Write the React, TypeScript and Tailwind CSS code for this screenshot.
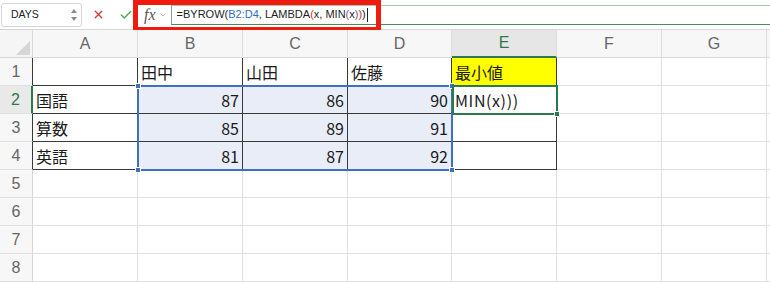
import { Fragment } from "react";
import { Check, X } from "lucide-react";

const cols = ["A", "B", "C", "D", "E", "F", "G", "H"];
const rows = [1, 2, 3, 4, 5, 6, 7, 8];

const data: Record<string, string> = {
  B1: "田中", C1: "山田", D1: "佐藤", E1: "最小値",
  A2: "国語", B2: "87", C2: "86", D2: "90", E2: "MIN(x)))",
  A3: "算数", B3: "85", C3: "89", D3: "91",
  A4: "英語", B4: "81", C4: "87", D4: "92",
};

const cellFont = { fontFamily: '"Noto Sans CJK JP", "Liberation Sans", sans-serif' };

function Cell({ row, ci }: { row: number; ci: number }) {
  const key = cols[ci] + row;
  const value = data[key] ?? "";
  const inTable = row <= 4 && ci <= 4;
  const selected = row >= 2 && row <= 4 && ci >= 1 && ci <= 3;
  const isNum = /^\d+$/.test(value);
  return (
    <div
      className={
        "h-[28px] border-r border-b flex items-center overflow-hidden whitespace-nowrap text-[16px] text-[#1a1a1a] px-[3px] " +
        (inTable ? "border-r-[#3a3a3a] border-b-[#3a3a3a] " : "border-r-[#e0e0e0] border-b-[#e0e0e0] ") +
        (selected ? "bg-[#e8edf8] " : key === "E1" ? "bg-[#ffff00] " : "bg-white ") +
        (isNum ? "justify-end" : "justify-start") +
        (key === "E2" ? " tracking-[0.6px]" : "")
      }
      style={cellFont}
    >
      {value}
    </div>
  );
}

export default function App() {
  return (
    <div className="w-[770px] h-[282px] bg-white overflow-hidden relative" style={{ fontFamily: '"Liberation Sans", sans-serif' }}>
      {/* formula bar */}
      <div className="h-[30px] flex items-center border-b border-[#d6d6d6] bg-white">
        <div className="ml-[1px] w-[81px] h-[24px] border border-[#d4d4d4] rounded-[3px] flex items-center justify-between pl-[9px] pr-[4px] text-[10.5px] text-[#222]">
          <span>DAYS</span>
          <svg width="6" height="14" viewBox="0 0 6 14">
            <path d="M3 1 L6 5 L0 5 Z" fill="#8a8a8a" />
            <path d="M0 9 L6 9 L3 13 Z" fill="#8a8a8a" />
          </svg>
        </div>
        <X className="ml-[10px] text-[#d93a2e]" size={13} strokeWidth={2.5} />
        <Check className="ml-[14px] text-[#4caf50]" size={14} strokeWidth={2.5} />
        <span className="ml-[11px] text-[16px] italic text-[#555]" style={{ fontFamily: '"Liberation Serif", serif' }}>fx</span>
        <svg className="ml-[4px]" width="6" height="4" viewBox="0 0 6 4">
          <path d="M0.5 0.5 L3 3 L5.5 0.5" stroke="#bdbdbd" fill="none" strokeWidth="1" />
        </svg>
        <div className="ml-[5px] flex-1 h-[20px] border-y border-l border-t-[#a9c6ad] border-b-[#4f8a5e] border-l-[#7aa586] flex items-center pl-[5px] text-[11px] text-[#1e1e1e]">
          <span>=BYROW(</span>
          <span className="text-[#2f6fc4]">B2:D4</span>
          <span>, LAMBDA</span>
          <span className="text-[#d0312d]">(</span>
          <span>x, MIN</span>
          <span className="text-[#8a4fa8]">(</span>
          <span>x</span>
          <span className="text-[#8a4fa8]">)</span>
          <span className="text-[#d0312d]">)</span>
          <span>)</span>
          <span className="ml-[1px] w-[1px] h-[14px] bg-[#222]" />
        </div>
      </div>

      {/* red highlight */}
      <div className="absolute left-[133px] top-0 w-[248px] h-[32px] border-[5px] border-[#ef1b0f]" />

      {/* sheet */}
      <div className="relative grid grid-cols-[33px_105px_105px_105px_104px_105px_105px_105px_1fr]">
        <div className="h-[28px] bg-[#f5f5f5] border-r border-b border-[#d9d9d9] relative overflow-hidden">
          <svg className="absolute right-[2px] bottom-[2px]" width="14" height="14" viewBox="0 0 14 14">
            <path d="M14 0 L14 14 L0 14 Z" fill="#d6d6d6" />
          </svg>
        </div>
        {cols.map((c) => (
          <div
            key={c}
            className={
              "h-[28px] flex items-center justify-center text-[16px] border-r border-[#dcdcdc] " +
              (c === "E"
                ? "bg-[#e6e6e6] text-[#2b7a4b] border-b-2 border-b-[#2b7a4b]"
                : "bg-[#f7f7f7] text-[#666] border-b border-b-[#d9d9d9]")
            }
          >
            {c === "H" ? "" : c}
          </div>
        ))}
        {rows.map((r) => (
          <Fragment key={r}>
            <div
              className={
                "h-[28px] flex items-center justify-center text-[16px] border-b border-b-[#e0e0e0] border-r " +
                (r === 2
                  ? "bg-[#e9e9e9] text-[#2b7a4b] border-r-2 border-r-[#2b7a4b]"
                  : r <= 4
                  ? "bg-[#f7f7f7] text-[#666] border-r-[#3a3a3a]"
                  : "bg-[#f7f7f7] text-[#666] border-r-[#d9d9d9]")
              }
            >
              {r}
            </div>
            {cols.map((_, ci) => (
              <Cell key={ci} row={r} ci={ci} />
            ))}
          </Fragment>
        ))}

        {/* selection B2:D4 */}
        <div className="absolute left-[137px] top-[55px] w-[316px] h-[86px] border-2 border-[#3f6fbf] pointer-events-none">
          <div className="absolute -left-[4px] -top-[4px] w-[6px] h-[6px] bg-[#3f6fbf] border border-white" />
          <div className="absolute -right-[4px] -top-[4px] w-[6px] h-[6px] bg-[#3f6fbf] border border-white" />
          <div className="absolute -left-[4px] -bottom-[4px] w-[6px] h-[6px] bg-[#3f6fbf] border border-white" />
          <div className="absolute -right-[4px] -bottom-[4px] w-[6px] h-[6px] bg-[#3f6fbf] border border-white" />
        </div>

        {/* active cell E2 */}
        <div className="absolute left-[452px] top-[55px] w-[106px] h-[30px] border-2 border-[#2b7a4b] pointer-events-none">
          <div className="absolute -right-[4px] -bottom-[4px] w-[6px] h-[6px] bg-[#2b7a4b] border border-white" />
        </div>
      </div>
    </div>
  );
}
